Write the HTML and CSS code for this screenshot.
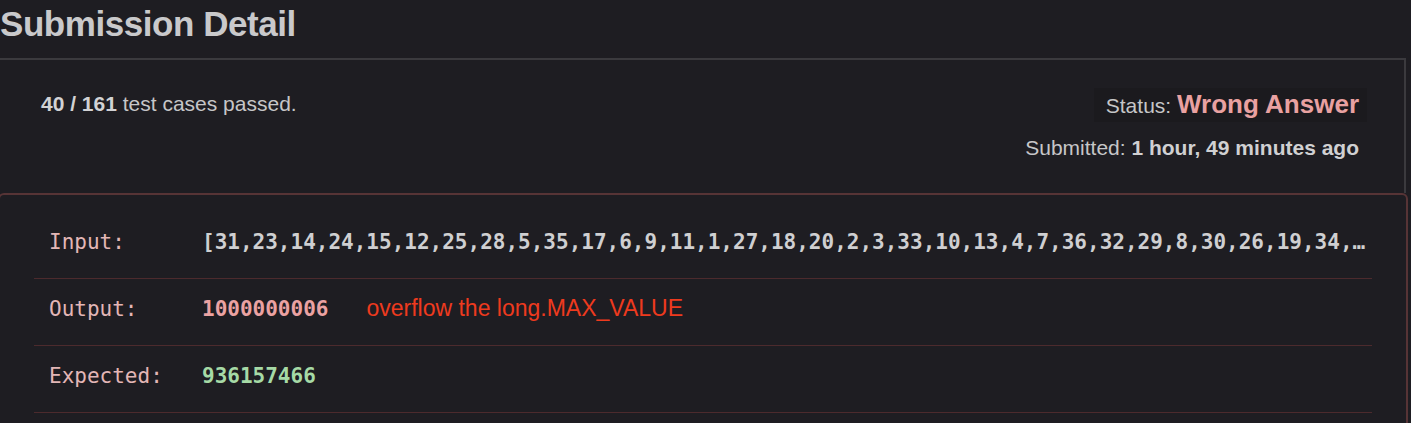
FILE: index.html
```html
<!DOCTYPE html>
<html>
<head>
<meta charset="utf-8">
<link rel="stylesheet" href="styles.css">
</head>
<body>
<h1 class="title">Submission Detail</h1>
<div class="summary">
  <div class="passed"><b>40 / 161</b> test cases passed.</div>
  <div class="meta">
    <div class="status">Status: <span class="wrong">Wrong Answer</span></div>
    <div class="submitted">Submitted: <b>1 hour, 49 minutes ago</b></div>
  </div>
</div>
<div class="details">
  <div class="row">
    <span class="label">Input:</span>
    <span class="value input">[31,23,14,24,15,12,25,28,5,35,17,6,9,11,1,27,18,20,2,3,33,10,13,4,7,36,32,29,8,30,26,19,34,…</span>
  </div>
  <div class="row">
    <span class="label">Output:</span>
    <span class="value output">1000000006</span>
    <span class="note">overflow the long.MAX_VALUE</span>
  </div>
  <div class="row">
    <span class="label">Expected:</span>
    <span class="value expected">936157466</span>
  </div>
</div>
</body>
</html>
```
FILE: styles.css
```css
html, body {
  margin: 0;
  padding: 0;
  background: #1e1d22;
  overflow: hidden;
}
body {
  width: 1411px;
  height: 423px;
  font-family: "Liberation Sans", Arial, sans-serif;
  color: #c8c8c8;
}
.title {
  margin: 0;
  padding: 4px 0 0 0;
  height: 58px;
  box-sizing: border-box;
  font-size: 35px;
  font-weight: 700;
  color: #c9c9cb;
  line-height: 40px;
  letter-spacing: -0.45px;
}
.summary {
  margin-left: -10px;
  width: 1416px;
  height: 135px;
  box-sizing: border-box;
  border-top: 2px solid #3b3a3e;
  border-right: 2px solid #3b3a3e;
  display: flex;
  justify-content: space-between;
  padding: 30px 45px 0 51px;
}
.passed {
  font-size: 21px;
  line-height: 28px;
  color: #c6c6c8;
}
.passed b { color: #d2d2d4; }
.meta {
  display: flex;
  flex-direction: column;
  align-items: flex-end;
  margin-top: -2px;
}
.status {
  font-size: 21px;
  line-height: 32px;
  padding: 0 8px 0 12px;
  background: #1b1a1e;
  color: #c6c6c8;
  margin-right: -8px;
}
.wrong {
  font-size: 26px;
  font-weight: 700;
  color: #e9a1a1;
}
.submitted {
  margin-top: 13px;
  font-size: 21px;
  line-height: 26px;
  color: #c6c6c8;
}
.submitted b { color: #d0d0d2; }
.details {
  margin-left: -2px;
  width: 1410px;
  height: 240px;
  box-sizing: border-box;
  border: 2px solid #573436;
  border-radius: 6px;
  padding: 17px 34px 0 34px;
}
.row {
  border-bottom: 1px solid #4c2a2d;
  display: flex;
  align-items: center;
  padding-left: 15px;
  padding-bottom: 7px;
  height: 59px;
  font-family: "DejaVu Sans Mono", Menlo, monospace;
  font-size: 21px;
  white-space: nowrap;
}
.label {
  width: 153px;
  flex: none;
  color: #e3b6b6;
}
.value {
  font-weight: 700;
}
.input { color: #cfcfd1; }
.output { color: #eba2a2; }
.expected { color: #a6daa6; }
.note {
  margin-left: 38px;
  font-family: "Liberation Sans", Arial, sans-serif;
  font-size: 23px;
  color: #ee3a1e;
}
```
